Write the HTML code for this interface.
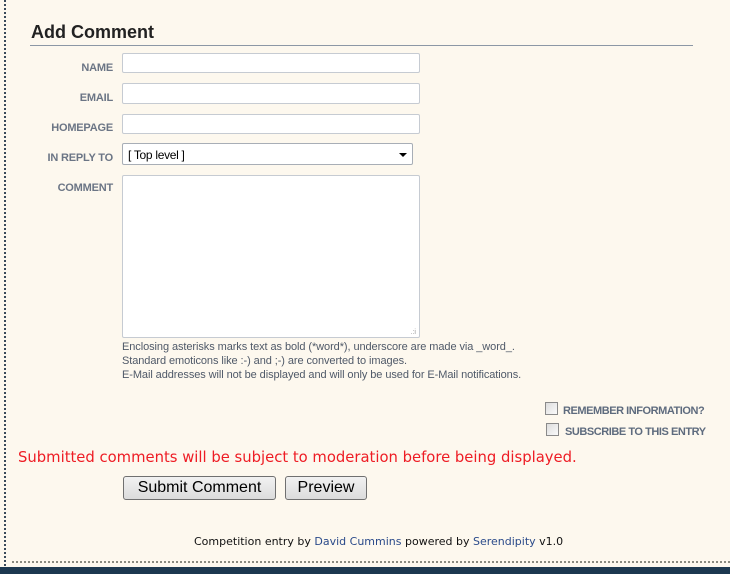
<!DOCTYPE html>
<html><head><meta charset="utf-8"><style>
*{margin:0;padding:0;box-sizing:border-box}
html,body{width:730px;height:574px;overflow:hidden;background:#fdf8ee;font-family:"Liberation Sans",Arial,sans-serif;position:relative}
.a{position:absolute}
.lbl{position:absolute;right:617px;font-size:11px;font-weight:bold;color:#6b7585;text-align:right;white-space:nowrap;letter-spacing:-0.2px}
.inp{position:absolute;left:122px;width:298px;background:#fff;border:1px solid #c6cbd2;border-radius:2px}
.hint{position:absolute;left:122px;font-size:11px;color:#4f5968;white-space:nowrap;letter-spacing:-0.08px}
.btn{position:absolute;top:476px;height:24px;border:1px solid #707070;border-radius:3px;background:linear-gradient(#f2f2f2,#dcdcdc);font-size:16px;color:#000;font-family:"Liberation Sans",Arial,sans-serif;text-align:center;line-height:22px;white-space:nowrap}
.cb{position:absolute;width:13px;height:13px;border:1px solid #8a8a8a;background:linear-gradient(135deg,#ddd,#fafafa)}
.cbl{position:absolute;font-size:11px;font-weight:bold;color:#5e6b7e;white-space:nowrap;letter-spacing:-0.45px}
</style></head><body>
<div class="a" style="left:4px;top:0;height:566px;border-left:2px dotted #3a4a5a"></div>
<div class="a" style="left:12px;top:561px;width:718px;border-top:2px dotted #8a8a80"></div>
<div class="a" style="left:0;top:567px;width:730px;height:7px;background:#1c3850"></div>
<div class="a" style="left:31px;top:22px;font-size:18px;font-weight:bold;color:#222">Add Comment</div>
<div class="a" style="left:30px;top:45px;width:663px;border-top:1px solid #8c97a5"></div>

<div class="lbl" style="top:62px">NAME</div>
<div class="inp" style="top:53px;height:20px"></div>
<div class="lbl" style="top:92px">EMAIL</div>
<div class="inp" style="top:83px;height:21px"></div>
<div class="lbl" style="top:122px">HOMEPAGE</div>
<div class="inp" style="top:114px;height:20px"></div>
<div class="lbl" style="top:152px">IN REPLY TO</div>
<div class="inp" style="top:143px;width:291px;height:22px;border-color:#a8aeb6;font-size:12px;padding:4px 0 0 5px;color:#000;letter-spacing:-0.3px">[ Top level ]<span class="a" style="right:5px;top:9px;width:0;height:0;border-left:4px solid transparent;border-right:4px solid transparent;border-top:4px solid #000"></span></div>
<div class="lbl" style="top:182px">COMMENT</div>
<div class="inp" style="top:175px;height:163px"><span class="a" style="right:3px;bottom:1px;font-size:7px;color:#999">.:i</span></div>

<div class="hint" style="top:341px">Enclosing asterisks marks text as bold (*word*), underscore are made via _word_.</div>
<div class="hint" style="top:355px">Standard emoticons like :-) and ;-) are converted to images.</div>
<div class="hint" style="top:369px">E-Mail addresses will not be displayed and will only be used for E-Mail notifications.</div>

<div class="cb" style="left:545px;top:402px"></div>
<div class="cbl" style="left:563px;top:405px">REMEMBER INFORMATION?</div>
<div class="cb" style="left:546px;top:423px"></div>
<div class="cbl" style="left:565px;top:426px">SUBSCRIBE TO THIS ENTRY</div>

<div class="a" style="left:18px;top:449px;font-size:14.8px;color:#ee1c24;font-family:'DejaVu Sans',Verdana,sans-serif;white-space:nowrap">Submitted comments will be subject to moderation before being displayed.</div>

<div class="btn" style="left:123px;width:153px">Submit Comment</div>
<div class="btn" style="left:285px;width:82px">Preview</div>

<div class="a" style="left:194px;top:535px;font-size:11px;font-family:'DejaVu Sans',Verdana,sans-serif;color:#111;white-space:nowrap">Competition entry by <span style="color:#2a4a8a">David Cummins</span> powered by <span style="color:#2a4a8a">Serendipity</span> v1.0</div>
</body></html>
